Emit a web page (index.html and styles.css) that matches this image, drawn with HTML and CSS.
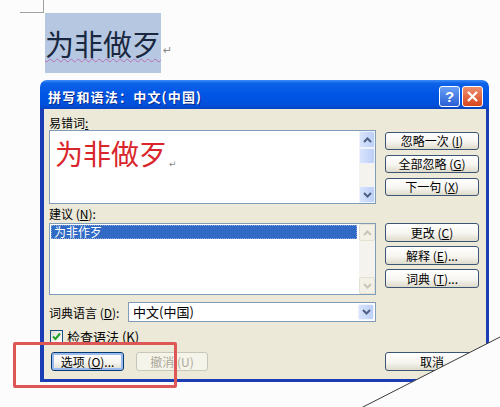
FILE: index.html
```html
<!DOCTYPE html>
<html lang="zh-CN">
<head>
    <meta charset="UTF-8">
    <title>拼写和语法</title>
    <link rel="stylesheet" href="styles.css">
</head>
<body>
    <div class="crop-mark"></div>
    <div class="doc-line">
        <span class="selected">为非做歹</span><span class="para">↵</span>
    </div>

    <div class="dialog">
        <div class="titlebar">
            <span class="title">拼写和语法：中文(中国)</span>
            <span class="title-buttons">
                <span class="tb-btn help">?</span>
                <span class="tb-btn close">
                    <svg width="13" height="13" viewBox="0 0 13 13"><path d="M2 2 L11 11 M11 2 L2 11" stroke="#fff" stroke-width="2.2" fill="none"/></svg>
                </span>
            </span>
        </div>
        <div class="dialog-body">
            <div class="label">易错词<u>:</u></div>
            <div class="row">
                <div class="textbox">
                    <div class="error-text">为非做歹<span class="para small">↵</span></div>
                    <div class="scrollbar">
                        <span class="sb-btn"><svg width="9" height="6" viewBox="0 0 9 6"><path d="M1 5 L4.5 1.5 L8 5" stroke="#4d6185" stroke-width="2" fill="none"/></svg></span>
                        <span class="sb-thumb"></span>
                        <span class="sb-track"></span>
                        <span class="sb-btn"><svg width="9" height="6" viewBox="0 0 9 6"><path d="M1 1 L4.5 4.5 L8 1" stroke="#4d6185" stroke-width="2" fill="none"/></svg></span>
                    </div>
                </div>
                <div class="btn-col">
                    <button class="btn">忽略一次 (<u>I</u>)</button>
                    <button class="btn">全部忽略 (<u>G</u>)</button>
                    <button class="btn">下一句 (<u>X</u>)</button>
                </div>
            </div>

            <div class="label label-tall">建议 (<u>N</u>):</div>
            <div class="row">
                <div class="listbox">
                    <div class="list-items">
                        <div class="item-selected">为非作歹</div>
                    </div>
                    <div class="scrollbar disabled">
                        <span class="sb-btn"><svg width="9" height="6" viewBox="0 0 9 6"><path d="M1 5 L4.5 1.5 L8 5" stroke="#c9c6b6" stroke-width="2" fill="none"/></svg></span>
                        <span class="sb-track"></span>
                        <span class="sb-btn"><svg width="9" height="6" viewBox="0 0 9 6"><path d="M1 1 L4.5 4.5 L8 1" stroke="#c9c6b6" stroke-width="2" fill="none"/></svg></span>
                    </div>
                </div>
                <div class="btn-col btn-col-tall">
                    <button class="btn">更改 (<u>C</u>)</button>
                    <button class="btn">解释 (<u>E</u>)...</button>
                    <button class="btn">词典 (<u>T</u>)...</button>
                </div>
            </div>

            <div class="lang-row">
                <span class="lang-label">词典语言 (<u>D</u>):</span>
                <div class="select">
                    <span class="select-value">中文(中国)</span>
                    <span class="select-btn"><svg width="9" height="6" viewBox="0 0 9 6"><path d="M1 1 L4.5 4.5 L8 1" stroke="#4d6185" stroke-width="2" fill="none"/></svg></span>
                </div>
            </div>

            <div class="check-row">
                <span class="checkbox"><svg width="11" height="11" viewBox="0 0 11 11"><path d="M2 5.5 L4.5 8 L9 2.5" stroke="#21a121" stroke-width="2" fill="none"/></svg></span>
                <span>检查语法 (K)</span>
            </div>

            <div class="bottom-row">
                <div class="bottom-left">
                    <button class="btn btn-default">选项 (<u>O</u>)...</button>
                    <button class="btn btn-disabled">撤消 (U)</button>
                </div>
                <button class="btn btn-wide">取消</button>
            </div>
        </div>
    </div>

    <div class="highlight-box"></div>

    <svg class="curl" width="500" height="407" viewBox="0 0 500 407">
        <polygon points="500,337 500,407 363,407" fill="#fcfcfc"/>
        <line x1="501" y1="336.5" x2="362" y2="407.5" stroke="#3a3a3a" stroke-width="1"/>
    </svg>
</body>
</html>
```

FILE: styles.css
```css
* {
    box-sizing: border-box;
}

body {
    margin: 0;
    width: 500px;
    height: 407px;
    overflow: hidden;
    position: relative;
    background: #fcfcfc;
    font-family: "Noto Sans CJK SC", "Noto Sans", sans-serif;
}

/* top-left crop mark of the Word page */
.crop-mark {
    margin-left: 20px;
    width: 24px;
    height: 13px;
    border-right: 1px solid #a0a0a0;
    border-bottom: 1px solid #a0a0a0;
}

.doc-line {
    margin-left: 45px;
    display: flex;
    align-items: center;
    height: 60px;
}

.selected {
    background: #b6c8e1;
    color: #1a2740;
    font-size: 29px;
    line-height: 60px;
    height: 60px;
    text-decoration: underline wavy #b56fb5 1px;
    text-underline-offset: 2px;
}

.para {
    color: #8a8a8a;
    font-size: 11px;
    font-family: "DejaVu Sans", sans-serif;
    margin: 14px 0 0 2px;
}

.para.small {
    font-size: 9px;
    margin-left: 2px;
    vertical-align: -2px;
}

/* dialog window */
.dialog {
    margin: 7px 0 0 40px;
    width: 449px;
}

.titlebar {
    height: 29px;
    border-radius: 7px 7px 0 0;
    background: linear-gradient(to bottom, #3d8cf7 0%, #0c62e8 12%, #0055e5 50%, #0050dc 85%, #0a44c0 100%);
    display: flex;
    align-items: center;
    justify-content: space-between;
    padding: 3px 6px 0 8px;
}

.title {
    color: #fff;
    font-weight: bold;
    font-size: 13px;
    letter-spacing: 1.2px;
    text-shadow: 1px 1px 0 #0b2b8a;
}

.title-buttons {
    display: flex;
    gap: 2px;
}

.tb-btn {
    width: 21px;
    height: 21px;
    border: 1px solid #fff;
    border-radius: 3px;
    display: flex;
    align-items: center;
    justify-content: center;
}

.help {
    background: linear-gradient(#6a9ff5, #2a5fd6);
    color: #fff;
    font: bold 15px "Liberation Sans", sans-serif;
}

.close {
    background: linear-gradient(#ec8f6e, #d8461e);
}

.dialog-body {
    background: #ece9d8;
    border-style: solid;
    border-color: #1a3db5;
    border-width: 0 3px 3px 4px;
    padding: 6px 7px 8px 5px;
    height: 273px;
    font-size: 12px;
    color: #000;
}

.label {
    height: 15px;
    line-height: 15px;
}

.label-tall {
    height: 19px;
    line-height: 19px;
}

.row {
    display: flex;
    gap: 9px;
}

.textbox,
.listbox {
    width: 327px;
    border: 1px solid #7f9db9;
    background: #fff;
    display: flex;
}

.textbox {
    height: 74px;
}

.listbox {
    height: 72px;
}

.error-text {
    flex: 1;
    color: #d9262c;
    font-size: 28px;
    line-height: 36px;
    padding: 4px 0 0 5px;
}

.scrollbar {
    width: 16px;
    display: flex;
    flex-direction: column;
    background: #f4f3ee;
}

.sb-btn,
.sb-thumb,
.select-btn {
    background: linear-gradient(to right, #d8e4fc, #bccff7);
    border: 1px solid #eef3fd;
    border-radius: 2px;
    display: flex;
    align-items: center;
    justify-content: center;
}

.sb-btn {
    height: 17px;
}

.sb-thumb {
    height: 16px;
}

.sb-track {
    flex: 1;
}

.scrollbar.disabled .sb-btn {
    background: #f2f0e7;
    border-color: #e4e1d3;
}

.list-items {
    flex: 1;
    padding: 1px 2px 0 1px;
}

.item-selected {
    background: #316ac5;
    color: #fff;
    height: 14px;
    line-height: 14px;
    padding-left: 3px;
    outline: 1px dotted #8aa8d8;
    outline-offset: -1px;
}

.btn-col {
    width: 94px;
    display: flex;
    flex-direction: column;
    gap: 5px;
    padding-top: 2px;
}

.btn-col-tall {
    gap: 4px;
    padding-top: 0;
}

.btn {
    height: 18px;
    padding: 0;
    border: 1px solid #3b5574;
    border-radius: 3px;
    background: linear-gradient(#ffffff 0%, #f6f5f0 55%, #dedbcb 100%);
    font: 12px "Noto Sans CJK SC", sans-serif;
    line-height: 16px;
    color: #000;
    text-align: center;
}

.btn-col-tall .btn {
    height: 19px;
}

.lang-row {
    display: flex;
    align-items: center;
    width: 327px;
    height: 20px;
    margin-top: 7px;
}

.lang-label {
    width: 79px;
}

.select {
    flex: 1;
    height: 20px;
    border: 1px solid #7f9db9;
    background: #fff;
    display: flex;
}

.select-value {
    flex: 1;
    font-size: 13px;
    line-height: 18px;
    padding-left: 4px;
}

.select-btn {
    width: 16px;
    margin: 1px;
}

.check-row {
    display: flex;
    align-items: center;
    gap: 4px;
    height: 13px;
    margin-top: 8px;
    padding-left: 1px;
    font-size: 13px;
}

.checkbox {
    width: 13px;
    height: 13px;
    border: 1px solid #1c5180;
    background: linear-gradient(135deg, #dcdcd6, #fff);
    display: flex;
    align-items: center;
    justify-content: center;
}

.bottom-row {
    display: flex;
    gap: 9px;
    margin-top: 9px;
}

.bottom-left {
    width: 327px;
    display: flex;
    gap: 12px;
    padding-left: 2px;
}

.bottom-row .btn {
    height: 19px;
}

.btn-default {
    width: 73px;
    border-color: #003c74;
    box-shadow: inset 0 0 0 2px #9cbaee;
}

.btn-disabled {
    width: 72px;
    border-color: #c9c7ba;
    background: #f5f4ea;
    color: #aca899;
}

.btn-wide {
    width: 94px;
}

/* red annotation box */
.highlight-box {
    position: absolute;
    left: 13px;
    top: 342px;
    width: 164px;
    height: 46px;
    border: 3px solid #df5656;
    border-radius: 2px;
}

/* page curl line in the bottom right corner */
.curl {
    position: absolute;
    left: 0;
    top: 0;
}
```
